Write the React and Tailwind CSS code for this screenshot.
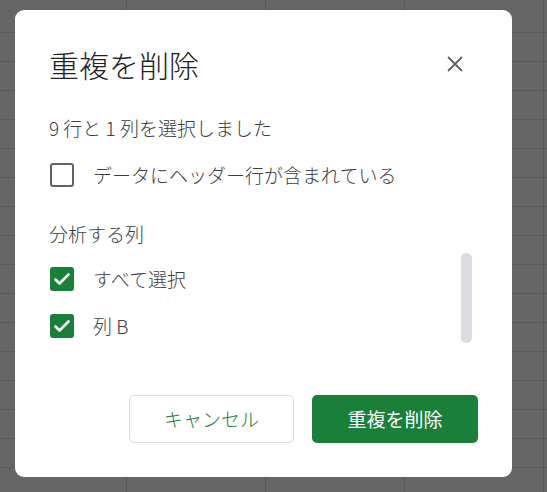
import React from 'react';

const font = { fontFamily: '"Noto Sans CJK JP", "Noto Sans", sans-serif' };

const CheckBox = ({ checked }) => (
  checked ? (
    <span className="flex h-[24px] w-[24px] shrink-0 items-center justify-center rounded-[3px] bg-[#188038]">
      <svg width="20" height="20" viewBox="0 0 20 20" fill="none">
        <path d="M3.5 10.5l4 4 9-9" stroke="#fff" strokeWidth="2.6" strokeLinecap="round" strokeLinejoin="round" />
      </svg>
    </span>
  ) : (
    <span className="block h-[24px] w-[24px] shrink-0 rounded-[3px] border-2 border-[#5f6368]" />
  )
);

const Row = ({ checked, children }) => (
  <div className="flex h-[24px] items-center">
    <CheckBox checked={checked} />
    <span className="ml-[19px] text-[19px] font-light leading-[24px] text-[#3c4043]">{children}</span>
  </div>
);

export default function App() {
  return (
    <div
      className="relative flex h-[492px] w-[547px] flex-col overflow-hidden bg-[#666666] bg-[linear-gradient(to_right,#5a5a5a_1px,transparent_1px),linear-gradient(to_bottom,#5a5a5a_1px,transparent_1px)] bg-[size:139px_29px] bg-[position:126px_32px]"
      style={font}
    >
      <div className="h-[32px] w-full bg-[#666666] bg-[linear-gradient(to_right,#5a5a5a_1px,transparent_1px)] bg-[size:139px_32px] bg-[position:126px_0]" />

      <div className="absolute left-[15px] top-[10px] flex h-[467px] w-[497px] flex-col rounded-[9px] bg-white px-[34px] pt-[34px]">
        <div className="flex h-[40px] items-center justify-between">
          <h1 className="text-[30px] font-light leading-[40px] text-[#202124]">重複を削除</h1>
          <svg width="16" height="16" viewBox="0 0 16 16" className="mr-[15px]">
            <path d="M1 1l14 14M15 1L1 15" stroke="#5f6368" strokeWidth="1.8" />
          </svg>
        </div>

        <p className="mt-[32px] text-[19px] font-light leading-[24px] text-[#3c4043]">9 行と 1 列を選択しました</p>

        <div className="mt-[23px] pl-[1px]">
          <Row checked={false}>データにヘッダー行が含まれている</Row>
        </div>

        <p className="mt-[35px] text-[19px] font-light leading-[24px] text-[#3c4043]">分析する列</p>

        <div className="mt-[7px] flex h-[90px] justify-between">
          <div className="flex flex-col gap-[23px] pl-[1px] pt-[14px]">
            <Row checked>すべて選択</Row>
            <Row checked>列 B</Row>
          </div>
          <div className="mr-[6px] h-[90px] w-[11px] rounded-full bg-[#dadce0]" />
        </div>

        <div className="mt-[52px] flex justify-end gap-[18px]">
          <button className="h-[48px] w-[165px] rounded-[5px] border border-[#dadce0] bg-white text-[19px] font-light text-[#188038]">
            キャンセル
          </button>
          <button className="h-[48px] w-[166px] rounded-[5px] bg-[#1a8039] text-[19px] font-normal text-white">
            重複を削除
          </button>
        </div>
      </div>
    </div>
  );
}
